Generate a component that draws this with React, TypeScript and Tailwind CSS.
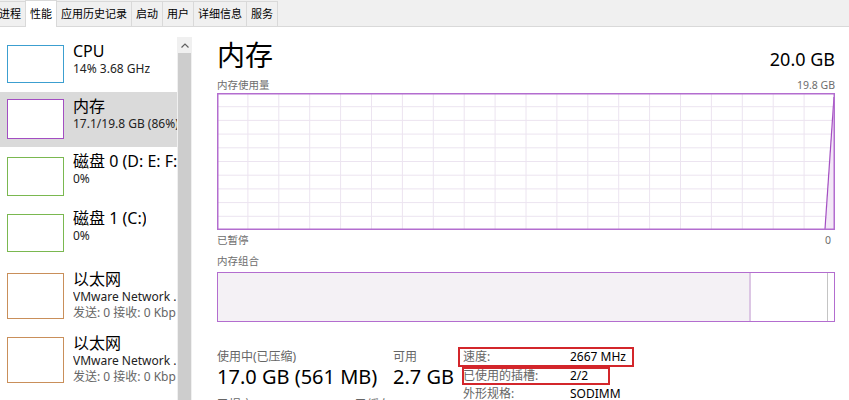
const font = { fontFamily: '"Noto Sans", "Noto Sans CJK SC", sans-serif' };

const tabs = ['进程', '性能', '应用历史记录', '启动', '用户', '详细信息', '服务'];

type Item = { title: string; lines: string[]; color: string; selected?: boolean; h: string; box: string };

const items: Item[] = [
  { title: 'CPU', lines: ['14% 3.68 GHz'], color: 'border-[#3c9fd0]', h: 'h-[55px]', box: 'h-[38px] mt-[8px]' },
  { title: '内存', lines: ['17.1/19.8 GB (86%)'], color: 'border-[#a34ec2]', selected: true, h: 'h-[55px]', box: 'h-[40px] mt-[7px]' },
  { title: '磁盘 0 (D: E: F:', lines: ['0%'], color: 'border-[#7ab850]', h: 'h-[57px]', box: 'h-[39px] mt-[10px]' },
  { title: '磁盘 1 (C:)', lines: ['0%'], color: 'border-[#7ab850]', h: 'h-[58px]', box: 'h-[38px] mt-[10px]' },
  { title: '以太网', lines: ['VMware Network .', '发送: 0 接收: 0 Kbp'], color: 'border-[#c98f5a]', h: 'h-[64px]', box: 'h-[46px] mt-[11px]' },
  { title: '以太网', lines: ['VMware Network .', '发送: 0 接收: 0 Kbp'], color: 'border-[#c98f5a]', h: 'h-[64px]', box: 'h-[46px] mt-[11px]' },
];

function UsageChart() {
  const w = 618;
  const h = 137;
  const cols = Array.from({ length: 19 }, (_, i) => ((i + 1) * w) / 20);
  const rows = Array.from({ length: 9 }, (_, i) => ((i + 1) * h) / 10);
  return (
    <svg width={w} height={h} className="block">
      {cols.map((x) => (
        <line key={'c' + x} x1={x} y1={0} x2={x} y2={h} stroke="#ece4f0" strokeWidth={1} />
      ))}
      {rows.map((y) => (
        <line key={'r' + y} x1={0} y1={y} x2={w} y2={y} stroke="#ece4f0" strokeWidth={1} />
      ))}
      <polygon points={`${w - 10},${h} ${w - 1},4 ${w - 1},${h}`} fill="#f3e8f7" />
      <polyline points={`${w - 10},${h - 1} ${w - 1},4`} fill="none" stroke="#a34ec2" strokeWidth={1.2} />
      <rect x={0.75} y={0.75} width={w - 1.5} height={h - 1.5} fill="none" stroke="#b36dcf" strokeWidth={1.5} />
    </svg>
  );
}

export default function App() {
  return (
    <div className="w-[849px] h-[400px] overflow-hidden bg-white text-black flex flex-col" style={font}>
      <div className="h-[27px] flex items-end bg-[#f0f0f0] border-b border-[#d9d9d9] shrink-0">
        {tabs.map((t, i) => (
          <div
            key={t}
            className={
              'h-[25px] px-[4px] flex items-center text-[11px] border border-b-0 border-[#d9d9d9] -mr-px ' +
              (i === 0 ? '-ml-[6px] ' : '') +
              (i === 1 ? 'bg-white h-[27px] -mb-px' : 'bg-[#f0f0f0]')
            }
          >
            {t}
          </div>
        ))}
      </div>

      <div className="flex flex-1 min-h-0">
        <div className="w-[177px] pt-[10px] flex flex-col shrink-0">
          {items.map((it, i) => (
            <div key={i} className={'flex shrink-0 ' + it.h + (it.selected ? ' bg-[#dadada]' : '')}>
              <div className={'w-[57px] ml-[7px] border bg-white shrink-0 ' + it.color + ' ' + it.box} />
              <div className={'ml-[9px] flex flex-col whitespace-nowrap overflow-hidden ' + (it.lines.length > 1 ? 'mt-[8px]' : 'mt-[5px]')}>
                <div className="text-[16px] leading-[19px]">{it.title}</div>
                {it.lines.map((l, j) => (
                  <div key={j} className={'text-[12px] leading-[16px] ' + (j === 1 ? 'text-[#666]' : 'text-[#222]')}>
                    {l}
                  </div>
                ))}
              </div>
            </div>
          ))}
        </div>

        <div className="w-[15px] mt-[10px] flex flex-col bg-[#f0f0f0] shrink-0">
          <div className="h-[16px] flex items-center justify-center">
            <svg width="8" height="5" viewBox="0 0 8 5">
              <polyline points="0.5,4.5 4,1 7.5,4.5" fill="none" stroke="#606060" strokeWidth="1.2" />
            </svg>
          </div>
          <div className="flex-1 mx-px bg-[#cdcdcd]" />
        </div>

        <div className="ml-[25px] w-[618px] flex flex-col pt-[10px]">
          <div className="flex items-end justify-between h-[45px]">
            <div className="text-[28px] leading-[36px] -mb-[2px]">内存</div>
            <div className="text-[18px] leading-[22px] mb-[1px]">20.0 GB</div>
          </div>
          <div className="flex justify-between text-[10.5px] leading-[14px] text-[#6d6d6d] mt-[7px]">
            <span>内存使用量</span>
            <span>19.8 GB</span>
          </div>
          <div className="mt-[1px]">
            <UsageChart />
          </div>
          <div className="flex justify-between text-[10.5px] leading-[14px] text-[#6d6d6d] mt-[3px]">
            <span>已暂停</span>
            <span className="mr-[4px]">0</span>
          </div>
          <div className="text-[10.5px] leading-[14px] text-[#6d6d6d] mt-[7px]">内存组合</div>
          <div className="mt-[4px] h-[50px] border-[1.5px] border-[#b36dcf] flex shrink-0">
            <div className="w-[531px] bg-[#f4f1f5]" />
            <div className="w-[2px] bg-[#dcc6e4]" />
            <div className="flex-1 bg-white" />
            <div className="w-px bg-[#c4c4c4] mr-[6px]" />
          </div>

          <div className="flex mt-[27px] shrink-0">
            <div className="w-[176px] flex flex-col">
              <div className="text-[12px] leading-[16px] text-[#666]">使用中(已压缩)</div>
              <div className="text-[20px] leading-[24px]">17.0 GB (561 MB)</div>
            </div>
            <div className="w-[70px] flex flex-col">
              <div className="text-[12px] leading-[16px] text-[#666]">可用</div>
              <div className="text-[20px] leading-[24px]">2.7 GB</div>
            </div>
            <div className="flex flex-col text-[12px] leading-[18px] -mt-[2px]">
              <div className="flex w-[176px] h-[20px] items-center border-2 border-[#d3262b] -ml-[5px] pl-[3px]">
                <span className="w-[107px] text-[#666]">速度:</span>
                <span>2667 MHz</span>
              </div>
              <div className="flex w-[148px] h-[18px] items-center border-2 border-[#d3262b] -ml-[1px]">
                <span className="w-[107px] text-[#666] -ml-px">已使用的插槽:</span>
                <span>2/2</span>
              </div>
              <div className="flex items-center h-[18px]">
                <span className="w-[107px] text-[#666]">外形规格:</span>
                <span>SODIMM</span>
              </div>
            </div>
          </div>
          <div className="flex text-[12px] leading-[16px] text-[#666] -mt-[6px] shrink-0">
            <span className="w-[138px]">已提交</span>
            <span>已缓存</span>
          </div>
        </div>
      </div>
    </div>
  );
}
